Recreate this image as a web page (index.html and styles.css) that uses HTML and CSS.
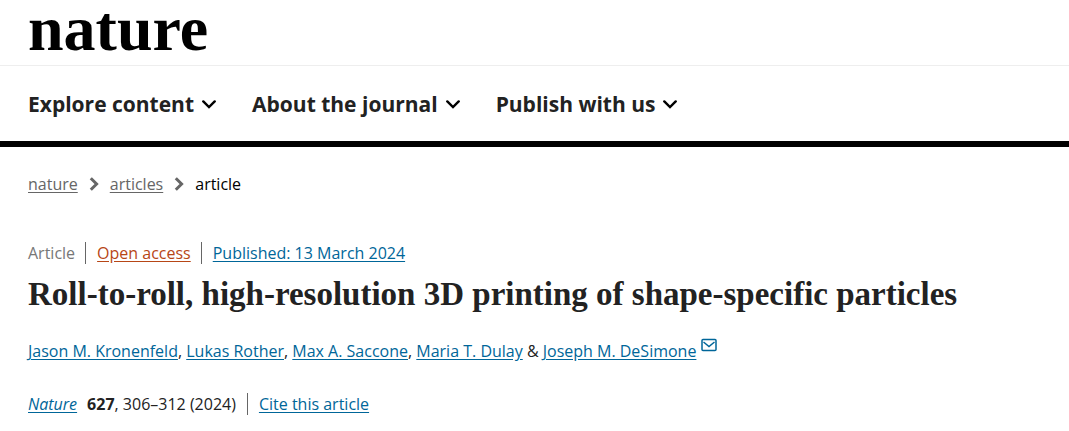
FILE: index.html
```html
<!DOCTYPE html>
<html lang="en">
<head>
<meta charset="utf-8">
<meta name="viewport" content="width=device-width, initial-scale=1">
<title>Roll-to-roll, high-resolution 3D printing of shape-specific particles | Nature</title>
<link rel="stylesheet" href="styles.css">
</head>
<body>
<header class="header">
  <div class="brand"><a class="logo" href="#">nature</a></div>
  <nav class="menu" aria-label="Main">
    <button class="menu-item" type="button">Explore content
      <svg class="chevron" viewBox="0 0 14 9" aria-hidden="true"><path d="M1.3 1.4 7 7 12.7 1.4"/></svg></button>
    <button class="menu-item" type="button">About the journal
      <svg class="chevron" viewBox="0 0 14 9" aria-hidden="true"><path d="M1.3 1.4 7 7 12.7 1.4"/></svg></button>
    <button class="menu-item" type="button">Publish with us
      <svg class="chevron" viewBox="0 0 14 9" aria-hidden="true"><path d="M1.3 1.4 7 7 12.7 1.4"/></svg></button>
  </nav>
</header>
<main class="content">
  <nav class="breadcrumbs" aria-label="Breadcrumbs">
    <a href="#">nature</a>
    <svg class="crumb-arrow" viewBox="0 0 10 14" aria-hidden="true"><path d="M1.8 1.2 7.6 7 1.8 12.8"/></svg>
    <a href="#">articles</a>
    <svg class="crumb-arrow" viewBox="0 0 10 14" aria-hidden="true"><path d="M1.8 1.2 7.6 7 1.8 12.8"/></svg>
    <span>article</span>
  </nav>
  <ul class="facts identifiers">
    <li class="kind">Article</li>
    <li><a class="open-access" href="#">Open access</a></li>
    <li><a href="#">Published: 13 March 2024</a></li>
  </ul>
  <h1 class="title">Roll-to-roll, high-resolution 3D printing of shape-specific particles</h1>
  <p class="authors"><a href="#">Jason M. Kronenfeld</a>, <a href="#">Lukas Rother</a>, <a href="#">Max A. Saccone</a>, <a href="#">Maria T. Dulay</a> &amp; <a href="#">Joseph M. DeSimone</a><a class="mail" href="#" aria-label="Email Joseph M. DeSimone"><svg class="mail-icon" viewBox="0 0 16 14" aria-hidden="true"><rect x="1" y="1.5" width="14" height="11" rx="1"/><path d="M2.5 4 8 8.5 13.5 4"/></svg></a></p>
  <ul class="facts">
    <li><a class="journal" href="#">Nature</a><b>627</b>, 306–312 (2024)</li>
    <li><a href="#">Cite this article</a></li>
  </ul>
</main>
</body>
</html>
```
FILE: styles.css
```css
* { box-sizing: border-box; }
body {
  margin: 0;
  background: #fff;
  color: #222;
  font-family: "Open Sans", "Noto Sans", sans-serif;
  font-size: 16px;
  line-height: 24px;
}
a { color: #069; text-underline-offset: 2px; }
.header { border-bottom: 6px solid #000; }
.brand {
  height: 66px;
  padding: 0 28px;
  border-bottom: 1px solid #eee;
}
.logo {
  display: inline-block;
  color: #000;
  font: bold 64px/58px "Liberation Serif", serif;
  text-decoration: none;
}
.menu {
  display: flex;
  flex-wrap: wrap;
  gap: 36px;
  padding: 22px 28px 21px;
}
.menu-item {
  display: flex;
  align-items: center;
  gap: 8px;
  padding: 0;
  border: 0;
  background: none;
  color: #222;
  font: bold 21px/32px "Open Sans", "Noto Sans", sans-serif;
}
.chevron {
  width: 14px;
  height: 9px;
  fill: none;
  stroke: #000;
  stroke-width: 2.4;
  stroke-linecap: round;
}
.content { padding: 25px 28px 14px; }
.breadcrumbs {
  display: flex;
  align-items: center;
  gap: 11px;
  margin-bottom: 46px;
  color: #000;
}
.breadcrumbs a { color: #666; }
.crumb-arrow {
  width: 10px;
  height: 14px;
  fill: none;
  stroke: #666;
  stroke-width: 3;
}
.facts {
  display: flex;
  flex-wrap: wrap;
  margin: 0;
  padding: 0;
  list-style: none;
}
.facts li + li {
  margin-left: 11px;
  padding-left: 11px;
  border-left: 1px solid #666;
}
.facts li { line-height: 22px; }
.identifiers li + li { margin-left: 10px; }
.kind { color: #777; }
.facts .open-access { color: #b74616; }
.title {
  margin: 10px 0 24px;
  font: bold 33px/40px "Liberation Serif", serif;
}
.authors { margin: 0 0 30px; }
.mail { margin-left: 5px; }
.mail-icon {
  width: 16px;
  height: 14px;
  vertical-align: 5px;
  fill: none;
  stroke: #069;
  stroke-width: 1.5;
}
.journal { margin-right: 10px; font-style: italic; }
```
